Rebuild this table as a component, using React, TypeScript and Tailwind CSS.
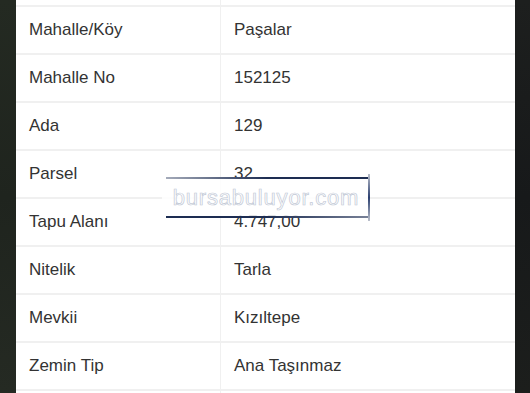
import React from "react";

const rows = [
  { label: "Mahalle/Köy", value: "Paşalar" },
  { label: "Mahalle No", value: "152125" },
  { label: "Ada", value: "129" },
  { label: "Parsel", value: "32" },
  { label: "Tapu Alanı", value: "4.747,00" },
  { label: "Nitelik", value: "Tarla" },
  { label: "Mevkii", value: "Kızıltepe" },
  { label: "Zemin Tip", value: "Ana Taşınmaz" },
];

export default function App() {
  return (
    <div className="relative w-[530px] h-[393px] overflow-hidden flex bg-[#1b1d1c] font-['Liberation_Sans',Arial,sans-serif]">
      {/* dark photo edges */}
      <div className="w-[16px] shrink-0 bg-gradient-to-b from-[#242a22] via-[#1f241e] to-[#252a23]" />

      {/* table panel */}
      <div className="w-[499px] shrink-0 bg-white flex flex-col">
        <div className="h-[7px] shrink-0 flex border-b-2 border-[#f0f0f0]">
          <div className="w-[205px] border-r border-[#f0f0f0]" />
        </div>
        {rows.map((r) => (
          <div key={r.label} className="h-[48px] shrink-0 flex items-center border-b-2 border-[#f0f0f0] text-[17px] text-[#333]">
            <div className="w-[205px] h-full flex items-center pl-[13px] border-r border-[#f0f0f0]">
              {r.label}
            </div>
            <div className="flex-1 h-full flex items-center pl-[13px]">{r.value}</div>
          </div>
        ))}
        <div className="flex-1 flex">
          <div className="w-[205px] border-r border-[#f0f0f0]" />
        </div>
      </div>

      <div className="flex-1 bg-gradient-to-b from-[#1d1f1e] via-[#17191a] to-[#1c1e1c]" />

      {/* watermark */}
      <div className="absolute left-[162px] top-[177px] w-[208px] h-[41px] bg-white/85 rounded-l-[10px] flex items-center justify-center">
        <div className="absolute left-[4px] right-[2px] top-0 h-[2px] bg-gradient-to-r from-[#1d2d52]/40 via-[#1d2d52] to-[#1d2d52]" />
        <div className="absolute left-[4px] right-[2px] bottom-0 h-[2px] bg-gradient-to-r from-[#1d2d52] via-[#1d2d52] to-[#1d2d52]/60" />
        <div className="absolute right-0 top-[-3px] bottom-[-3px] w-[2px] bg-gradient-to-b from-[#1d2d52]/30 via-[#2c4070] to-[#1d2d52]/30" />
        <span className="text-[22px] tracking-[0.8px] text-white [-webkit-text-stroke:0.7px_#c2c9d6] leading-none">
          bursabuluyor.com
        </span>
      </div>
    </div>
  );
}
